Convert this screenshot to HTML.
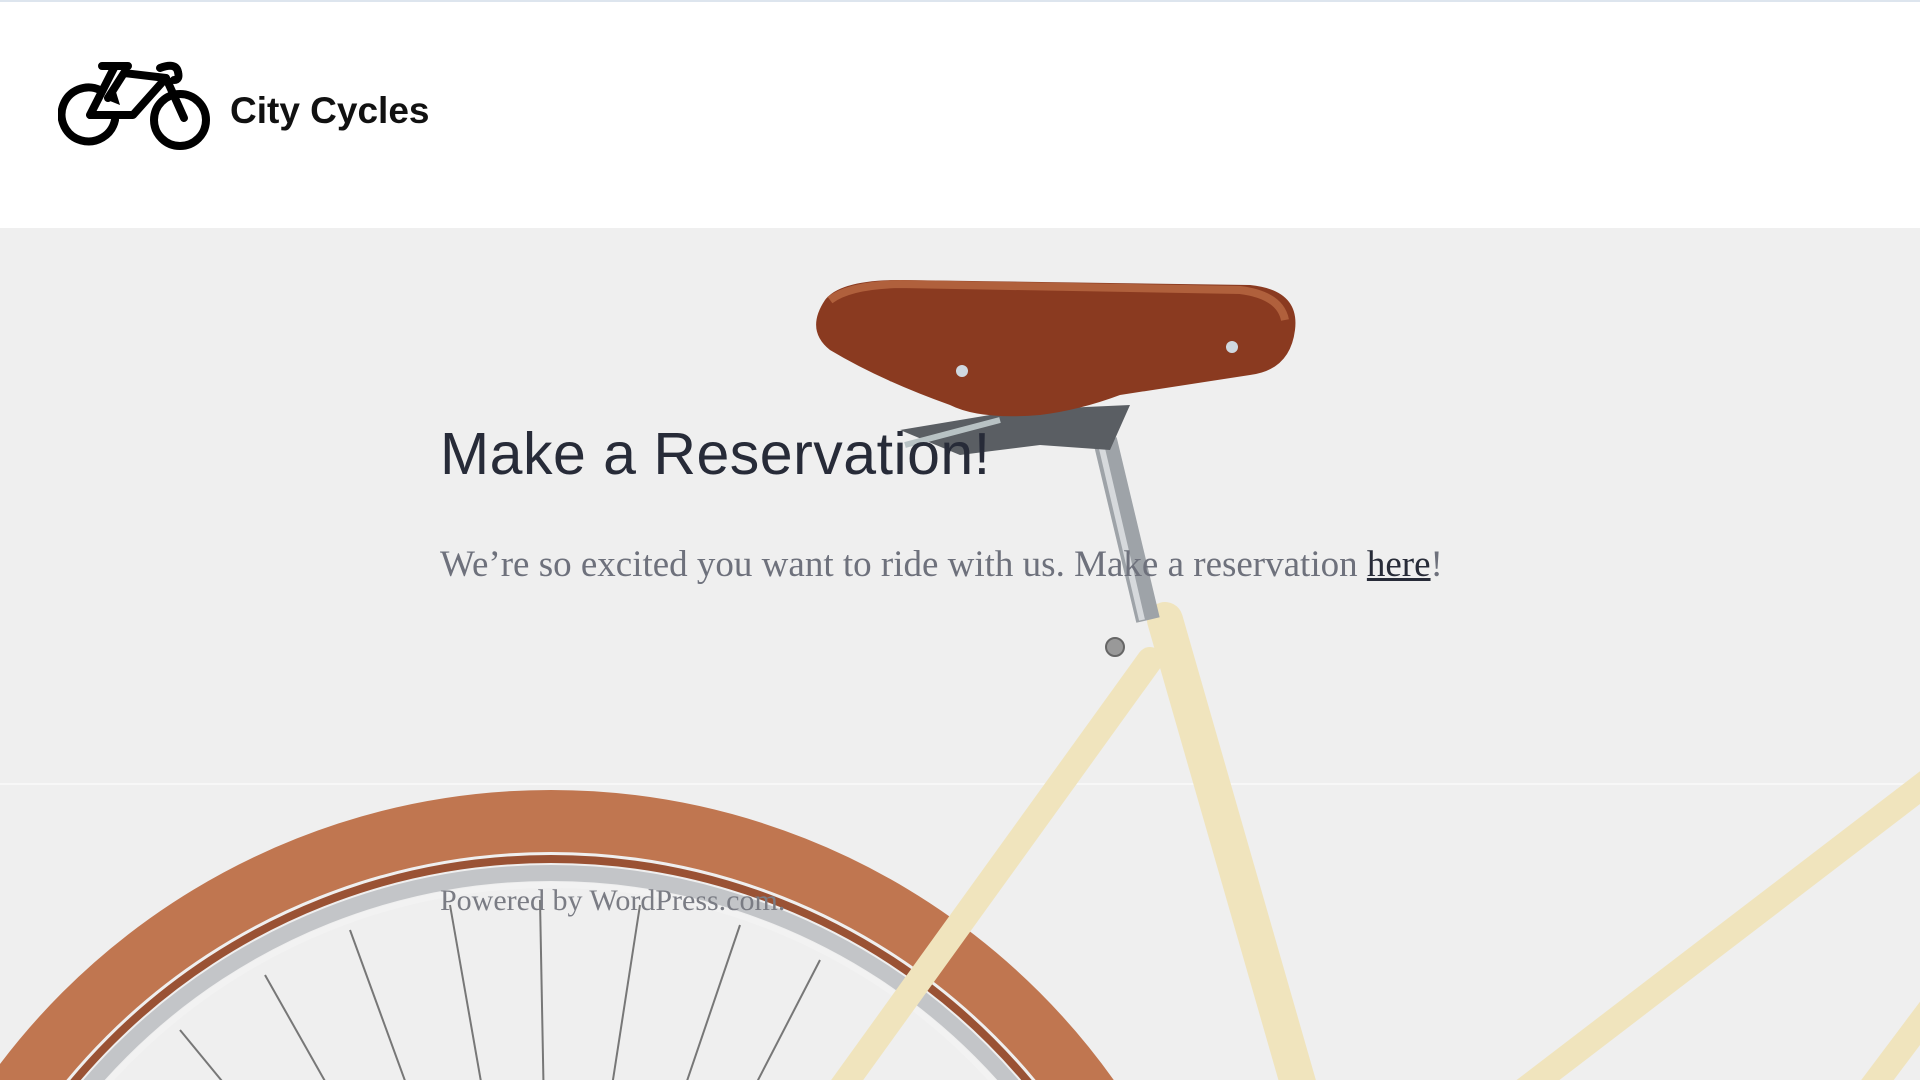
<!DOCTYPE html>
<html><head><meta charset="utf-8"><style>
html,body{margin:0;padding:0;width:1920px;height:1080px;overflow:hidden;background:#efefef;font-family:"Liberation Sans",sans-serif;position:relative}
.hdr{position:absolute;left:0;top:0;width:1920px;height:228px;background:#fff;border-top:2px solid #dde5ee;box-sizing:border-box}
.brand{position:absolute;left:230px;top:88px;font:bold 37px "Liberation Sans",sans-serif;color:#111}
svg.bg{position:absolute;left:0;top:0;display:block}
h1{position:absolute;left:440px;top:420px;margin:0;font:400 59px "Liberation Sans",sans-serif;color:#272b38;letter-spacing:0.5px}
p{position:absolute;left:440px;top:543px;margin:0;font:37px "Liberation Serif",serif;color:#6e717c;white-space:nowrap}
p a{color:#272b38;text-decoration:underline}
.ft{position:absolute;left:440px;top:884px;font:30px "Liberation Serif",serif;color:#7a7c84;white-space:nowrap}
</style></head><body>
<svg class="bg" width="1920" height="1080" viewBox="0 0 1920 1080">
<line x1="0" y1="784" x2="1920" y2="784" stroke="#f7f7f7" stroke-width="2"/>
<circle cx="551" cy="1481" r="660" fill="none" stroke="#c07650" stroke-width="62"/>
<circle cx="551" cy="1481" r="622" fill="none" stroke="#9a5234" stroke-width="8"/>
<circle cx="551" cy="1481" r="608" fill="none" stroke="#c3c5c8" stroke-width="16"/>
<circle cx="551" cy="1481" r="596" fill="none" stroke="#f2f2f2" stroke-width="6"/>
<g stroke="#777" stroke-width="2">
<line x1="551" y1="1481" x2="540" y2="900"/><line x1="551" y1="1481" x2="640" y2="905"/>
<line x1="551" y1="1481" x2="450" y2="905"/><line x1="551" y1="1481" x2="350" y2="930"/>
<line x1="551" y1="1481" x2="740" y2="925"/><line x1="551" y1="1481" x2="265" y2="975"/>
<line x1="551" y1="1481" x2="820" y2="960"/><line x1="551" y1="1481" x2="180" y2="1030"/>
</g>
<g stroke="#f0e4bd" stroke-linecap="round">
<line x1="1165" y1="620" x2="1300" y2="1090" stroke-width="36"/>
<line x1="1150" y1="660" x2="840" y2="1090" stroke-width="26"/>
<line x1="1930" y1="780" x2="1525" y2="1090" stroke-width="26"/>
<line x1="1930" y1="1010" x2="1870" y2="1090" stroke-width="26"/>
</g>
<line x1="1105" y1="440" x2="1148" y2="620" stroke="#9ea3a8" stroke-width="24"/>
<line x1="1100" y1="440" x2="1142" y2="620" stroke="#d6d9dc" stroke-width="6"/>
<circle cx="1115" cy="647" r="9" fill="#999" stroke="#666" stroke-width="2"/>
<path d="M900 430 L1020 410 L1130 405 L1110 450 L1040 445 L960 455 Z" fill="#5a5e63"/>
<path d="M905 445 L1000 420" stroke="#b8c2c4" stroke-width="6"/>
<path d="M825 300 Q840 280 900 280 L1250 285 Q1300 290 1295 330 Q1290 370 1250 375 L1120 395 Q1080 410 1040 415 Q980 420 950 405 Q880 380 830 350 Q805 330 825 300 Z" fill="#8a3a20"/>
<path d="M830 300 Q850 285 900 284 L1240 290 Q1280 295 1285 320" fill="none" stroke="#b0603c" stroke-width="8"/>
<circle cx="962" cy="371" r="6" fill="#cfd8e0"/><circle cx="1232" cy="347" r="6" fill="#cfd8e0"/>
</svg>
<div class="hdr">
<svg style="position:absolute;left:58px;top:56px" width="160" height="94" viewBox="0 0 160 94">
<g fill="none" stroke="#000" stroke-width="8" stroke-linecap="round" stroke-linejoin="round">
<path d="M42 32 A27 27 0 1 0 57 62"/>
<circle cx="122" cy="62" r="26"/>
<path d="M44 8 L70 8 M57 8 L32 57 L75 57 L108 20 L66 15 L50 40"/>
<path d="M108 20 L126 60 M102 10 Q118 4 120 14 Q122 22 116 22"/>
</g>
<path d="M52 43 L58 34 L62 47 Z" fill="#000"/>
</svg>
<div class="brand">City Cycles</div>
</div>
<h1>Make a Reservation!</h1>
<p>We’re so excited you want to ride with us. Make a reservation <a>here</a>!</p>
<div class="ft">Powered by WordPress.com.</div>
</body></html>
